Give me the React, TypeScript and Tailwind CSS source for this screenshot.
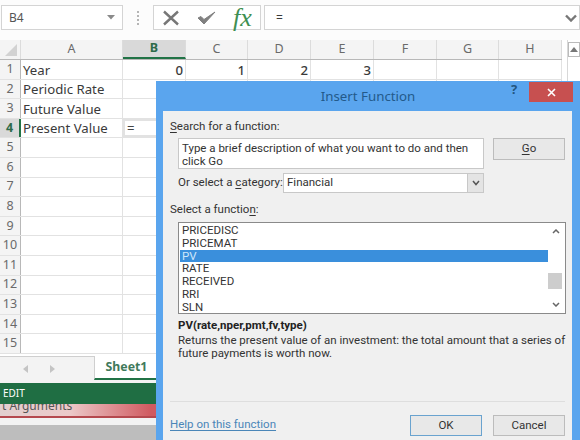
import React from "react";

const cols = ["A", "B", "C", "D", "E", "F", "G", "H"];
const colWClass = ["w-[102px]", "w-[63px]", "w-[62px]", "w-[63px]", "w-[63px]", "w-[63px]", "w-[62px]", "w-[63px]"];
const rows: Record<number, string[]> = {
  1: ["Year", "0", "1", "2", "3", "", "", ""],
  2: ["Periodic Rate", "", "", "", "", "", "", ""],
  3: ["Future Value", "", "", "", "", "", "", ""],
  4: ["Present Value", "=", "", "", "", "", "", ""],
};
const fns = ["PRICEDISC", "PRICEMAT", "PV", "RATE", "RECEIVED", "RRI", "SLN"];

function U({ children }: { children: React.ReactNode }) {
  return <span className="underline underline-offset-2">{children}</span>;
}

export default function App() {
  return (
    <div className="relative w-[580px] h-[440px] overflow-hidden bg-white font-['Noto_Sans',sans-serif] text-[#3a3a3a]">
      {/* formula bar */}
      <div className="h-[40px] flex items-start pt-[5px] bg-[#fcfcfc]">
        <div className="ml-px w-[122px] h-[25px] border border-[#d4d4d4] bg-white flex items-center justify-between pl-[7px] pr-[7px] text-[12px] text-[#555]">
          <span>B4</span>
          <svg width="8" height="5" viewBox="0 0 8 5"><path d="M0 0h8L4 4.500z" fill="#8a8a8a" /></svg>
        </div>
        <div className="w-[30px] h-[25px] flex flex-col items-center justify-center gap-[2px]">
          <i className="block w-[2px] h-[2px] bg-[#b5b5b5]" />
          <i className="block w-[2px] h-[2px] bg-[#b5b5b5]" />
          <i className="block w-[2px] h-[2px] bg-[#b5b5b5]" />
          <i className="block w-[2px] h-[2px] bg-[#b5b5b5]" />
        </div>
        <div className="w-[108px] h-[25px] border border-[#d4d4d4] bg-white flex items-center pl-[8px]">
          <svg width="18" height="16" viewBox="0 0 18 16" className="shrink-0"><path d="M2 1.500L16 14.500M16 1.500L2 14.500" stroke="#777" strokeWidth="2.400" fill="none" /></svg>
          <svg width="20" height="16" viewBox="0 0 20 16" className="ml-[17px] shrink-0"><path d="M1 8L7 14L18 2L7 9.500L4 6.500z" fill="#808080" stroke="#808080" strokeWidth="1" /></svg>
          <span className="ml-[16px] text-[#3f8f52] text-[26px] italic leading-none font-['Liberation_Serif',serif]">fx</span>
        </div>
        <div className="ml-[3px] flex-1 h-[25px] border border-[#d4d4d4] bg-white flex items-center justify-between pl-[11px] pr-[2px] text-[12px]">
          <span>=</span>
          <svg width="12" height="8" viewBox="0 0 12 8"><path d="M1 1.500L6 6.500L11 1.500" stroke="#777" strokeWidth="2.400" fill="none" /></svg>
        </div>
      </div>

      {/* grid */}
      <div className="flex">
        <div className="w-[562px]">
          <div className="flex h-[20px] bg-[#f4f4f4] border-b border-[#b8b8b8]">
            <div className="w-[21px] border-r border-[#dcdcdc] flex items-end justify-end pr-[3px] pb-[3px]">
              <svg width="12" height="12" viewBox="0 0 12 12"><path d="M12 0V12H0z" fill="#d2d2d2" /></svg>
            </div>
            {cols.map((c, i) => (
              <div
                key={c}
                className={`${colWClass[i]} flex items-center justify-center text-[12.500px] border-r border-[#dcdcdc] ${c === "B" ? "bg-[#d9d9d9] border-b-2 border-b-[#217346] font-bold text-[#2e6b4a]" : "text-[#6a6a6a]"}`}
              >
                {c}
              </div>
            ))}
          </div>
          {Array.from({ length: 15 }, (_, k) => k + 1).map((n) => {
            const cells = rows[n] ?? ["", "", "", "", "", "", "", ""];
            return (
              <div key={n} className="flex h-[19.600px] border-b border-[#e2e2e2]">
                <div className={`w-[21px] shrink-0 flex items-center justify-center text-[12.500px] border-r ${n === 4 ? "bg-[#d9d9d9] border-r-2 border-r-[#217346] font-bold text-[#2e6b4a]" : "bg-[#f4f4f4] border-[#b8b8b8] text-[#6a6a6a]"}`}>
                  {n}
                </div>
                {cells.map((t, i) => (
                  <div
                    key={i}
                    className={`${colWClass[i]} shrink-0 flex items-center pt-[2px] text-[13.200px] leading-none whitespace-nowrap border-r border-[#e2e2e2] ${i > 0 && t !== "=" ? "justify-end pr-[2px] font-medium" : "pl-[2px]"} ${n === 4 && i === 1 ? "border-2 border-[#217346] text-[#444]" : ""}`}
                  >
                    {t}
                  </div>
                ))}
              </div>
            );
          })}
        </div>
        <div className="ml-[5px] w-[13px] border-l border-[#d8d8d8]">
          <div className="h-[15px] mt-[2px] border border-[#bbb] flex items-center justify-center">
            <svg width="8" height="5" viewBox="0 0 8 5"><path d="M0 5h8L4 0z" fill="#777" /></svg>
          </div>
        </div>
      </div>

      {/* sheet tabs */}
      <div className="mt-[2px] h-[27px] flex items-start bg-[#f3f3f3] border-t border-[#cfcfcf]">
        <div className="w-[94px] h-[24px] flex items-center pl-[23px] gap-[22px]">
          <svg width="5" height="8" viewBox="0 0 5 8"><path d="M5 0V8L0 4z" fill="#c4c4c4" /></svg>
          <svg width="5" height="8" viewBox="0 0 5 8"><path d="M0 0V8L5 4z" fill="#c4c4c4" /></svg>
        </div>
        <div className="w-[62px] h-[24px] -mt-px bg-white border-l border-[#cfcfcf] border-b-2 border-b-[#217346] pl-[2px] flex items-center justify-center text-[12.300px] font-bold text-[#3f7a5b]">
          Sheet1
        </div>
      </div>

      {/* status bar */}
      <div className="relative z-10 h-[21px] bg-[#1f6e43] text-white text-[10px] flex items-center pl-[3px]">EDIT</div>

      {/* window behind */}
      <div className="h-[14px] bg-[linear-gradient(90deg,#e2cfcf_0%,#ecc9c9_12%,#d05a60_26%,#d05a60_100%)] border-b-2 border-[#b5484e] text-[12px] leading-[4px] text-[#555] overflow-hidden pl-[2px]">
        t Arguments
      </div>
      <div className="h-[7px] bg-[#f2f2f2]" />
      <div className="h-[15px] bg-[#bdbdbd]" />

      {/* dialog */}
      <div className="absolute z-20 left-[156px] top-[81px] w-[424px] h-[359px] bg-[#5aa5ee] flex flex-col">
        <div className="relative h-[30px] shrink-0 pt-[2px] flex items-center justify-center text-[13.300px] text-[#235a8a]">
          Insert Function
          <span className="absolute left-[355px] top-[-1px] text-[13px] font-bold text-[#23557f]">?</span>
          <div className="absolute left-[373px] top-px w-[44px] h-[20px] bg-[#c75050] flex items-center justify-center">
            <svg width="9" height="9" viewBox="0 0 9 9"><path d="M1 1L8 8M8 1L1 8" stroke="#fff" strokeWidth="1.600" /></svg>
          </div>
        </div>
        <div className="flex-1 ml-[7px] mr-[8px] bg-[#f0f0f0] pl-[7px] pr-[7px] font-['Roboto',sans-serif] text-[11.500px] text-[#333] flex flex-col">
          <div className="mt-[7px] h-[16px] leading-[16px]"><U>S</U>earch for a function:</div>
          <div className="mt-[4px] flex items-start">
            <div className="ml-[8px] w-[306px] h-[31px] bg-white border border-[#c8c8c8] pl-[3px] leading-[13px] pt-[3px] whitespace-nowrap">
              Type a brief description of what you want to do and then<br />click Go
            </div>
            <div className="ml-[9px] w-[72px] h-[22px] border border-[#bcbcbc] bg-[#e8e8e8] flex items-center justify-center"><span><U>G</U>o</span></div>
          </div>
          <div className="mt-[4px] ml-[8px] flex items-center h-[20px]">
            <span className="w-[105px] whitespace-nowrap">Or select a <U>c</U>ategory:</span>
            <div className="w-[201px] h-[20px] bg-white border border-[#c8c8c8] pl-[3px] flex items-center justify-between">
              <span>Financial</span>
              <div className="w-[16px] h-[18px] bg-[#e4e4e4] border-l border-[#c8c8c8] flex items-center justify-center">
                <svg width="8" height="6" viewBox="0 0 8 6"><path d="M1 1L4 4.500L7 1" stroke="#555" strokeWidth="1.500" fill="none" /></svg>
              </div>
            </div>
          </div>
          <div className="mt-[8px] h-[16px] leading-[16px]">Select a functio<U>n</U>:</div>
          <div className="mt-[5px] ml-[8px] w-[388px] h-[92px] bg-white border border-[#8a8a8a] flex p-px">
            <div className="flex-1 text-[#333]">
              {fns.map((f) => (
                <div key={f} className={`h-[12.800px] leading-[12.800px] pl-[2px] ${f === "PV" ? "bg-[#3a8fdc] text-[#cfe6fa]" : ""}`}>{f}</div>
              ))}
            </div>
            <div className="w-[16px] flex flex-col items-center justify-between py-[5px] relative">
              <svg width="8" height="5" viewBox="0 0 8 5"><path d="M1 4L4 1L7 4" stroke="#666" strokeWidth="1.500" fill="none" /></svg>
              <div className="absolute top-[49px] left-0 w-[14px] h-[16px] bg-[#cdcdcd]" />
              <svg width="8" height="5" viewBox="0 0 8 5"><path d="M1 1L4 4L7 1" stroke="#666" strokeWidth="1.500" fill="none" /></svg>
            </div>
          </div>
          <div className="mt-[3px] ml-[8px] h-[16px] leading-[16px] font-bold text-[#222]">PV(rate,nper,pmt,fv,type)</div>
          <div className="mt-[1px] ml-[8px] leading-[13px] whitespace-nowrap">
            Returns the present value of an investment: the total amount that a series of<br />future payments is worth now.
          </div>
          <div className="mt-[41px] border-t border-[#dedede]" />
          <div className="mt-[13px] flex items-start">
            <a className="mt-[1px] text-[#4a86b8] underline underline-offset-2">Help on this function</a>
            <div className="ml-auto mr-[11px] w-[72px] h-[21px] border border-[#6aa3cf] bg-[#e8e8e8] flex items-center justify-center">OK</div>
            <div className="w-[72px] h-[21px] border border-[#bcbcbc] bg-[#e8e8e8] flex items-center justify-center">Cancel</div>
          </div>
        </div>
      </div>
    </div>
  );
}
